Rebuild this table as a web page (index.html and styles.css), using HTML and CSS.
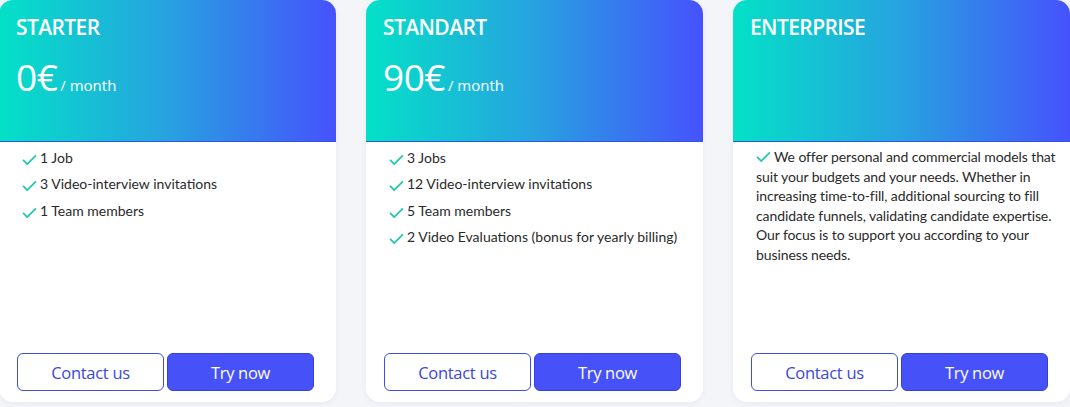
FILE: index.html
```html
<!DOCTYPE html>
<html>
<head>
<meta charset="utf-8">
<link rel="stylesheet" href="styles.css">
</head>
<body>
<div class="plans">
  <div class="card">
    <div class="head">
      <div class="title">STARTER</div>
      <div class="price"><span class="amount">0€</span><span class="per">/ month</span></div>
    </div>
    <ul class="features">
      <li><svg class="check" viewBox="0 0 16 12"><path d="M1 6.5 L5.5 11 L15 1.5"/></svg>1 Job</li>
      <li><svg class="check" viewBox="0 0 16 12"><path d="M1 6.5 L5.5 11 L15 1.5"/></svg>3 Video-interview invitations</li>
      <li><svg class="check" viewBox="0 0 16 12"><path d="M1 6.5 L5.5 11 L15 1.5"/></svg>1 Team members</li>
    </ul>
    <div class="actions">
      <button class="btn outline">Contact us</button>
      <button class="btn filled">Try now</button>
    </div>
  </div>
  <div class="card">
    <div class="head">
      <div class="title">STANDART</div>
      <div class="price"><span class="amount">90€</span><span class="per">/ month</span></div>
    </div>
    <ul class="features">
      <li><svg class="check" viewBox="0 0 16 12"><path d="M1 6.5 L5.5 11 L15 1.5"/></svg>3 Jobs</li>
      <li><svg class="check" viewBox="0 0 16 12"><path d="M1 6.5 L5.5 11 L15 1.5"/></svg>12 Video-interview invitations</li>
      <li><svg class="check" viewBox="0 0 16 12"><path d="M1 6.5 L5.5 11 L15 1.5"/></svg>5 Team members</li>
      <li><svg class="check" viewBox="0 0 16 12"><path d="M1 6.5 L5.5 11 L15 1.5"/></svg>2 Video Evaluations (bonus for yearly billing)</li>
    </ul>
    <div class="actions">
      <button class="btn outline">Contact us</button>
      <button class="btn filled">Try now</button>
    </div>
  </div>
  <div class="card">
    <div class="head">
      <div class="title">ENTERPRISE</div>
    </div>
    <p class="desc"><svg class="check" viewBox="0 0 16 12"><path d="M1 6.5 L5.5 11 L15 1.5"/></svg>We offer personal and commercial models that suit your budgets and your needs. Whether in increasing time-to-fill, additional sourcing to fill candidate funnels, validating candidate expertise. Our focus is to support you according to your business needs.</p>
    <div class="actions">
      <button class="btn outline">Contact us</button>
      <button class="btn filled">Try now</button>
    </div>
  </div>
</div>
</body>
</html>
```

FILE: styles.css
```css
* { box-sizing: border-box; }
html, body { margin: 0; padding: 0; }
body {
  background: #f3f5f9;
  width: 1070px;
  height: 407px;
  overflow: hidden;
  font-family: "Lato", "Noto Sans", sans-serif;
}
.plans {
  display: flex;
  gap: 30px;
  margin-left: -1px;
}
.card {
  width: 337px;
  height: 402px;
  flex: none;
  background: #fff;
  border-radius: 14px;
  box-shadow: 0 2px 6px rgba(40, 60, 120, 0.06);
  display: flex;
  flex-direction: column;
  overflow: hidden;
}
.head {
  height: 142px;
  flex: none;
  padding: 13px 17px 0;
  background: linear-gradient(90deg, #03e1c7 0%, #27a2e0 50%, #4652fd 100%);
  border-bottom: 1px solid #2d57d8;
  color: #fff;
}
.title {
  font-family: "Open Sans", sans-serif;
  font-weight: 600;
  font-size: 21px;
  letter-spacing: -0.6px;
  line-height: 28px;
}
.price {
  margin-top: 15px;
  display: flex;
  align-items: baseline;
}
.amount {
  font-family: "Open Sans", sans-serif;
  font-size: 37px;
  font-weight: 500;
  letter-spacing: -0.5px;
  line-height: 42px;
}
.per {
  font-family: "Open Sans", sans-serif;
  font-size: 15px;
  margin-left: 3px;
}
.features {
  list-style: none;
  margin: 0;
  padding: 3px 0 0 23px;
  flex: 1;
}
.features li {
  font-size: 14px;
  color: #2a2a2a;
  line-height: 26.3px;
  display: flex;
  align-items: center;
}
.check {
  width: 15px;
  height: 11px;
  margin-right: 3px;
  margin-top: 3px;
  fill: none;
  stroke: #1ec7ad;
  stroke-width: 1.9;
  flex: none;
}
.desc {
  margin: 0;
  padding: 5px 4px 0 23px;
  font-size: 14px;
  color: #2a2a2a;
  line-height: 19.5px;
  letter-spacing: -0.1px;
  flex: 1;
}
.desc .check {
  display: inline-block;
  vertical-align: baseline;
  margin: 0 3px 0 0;
}
.actions {
  display: flex;
  gap: 3px;
  padding: 0 0 11px 18px;
}
.btn {
  width: 147px;
  height: 38px;
  border-radius: 6px;
  font-family: "Open Sans", sans-serif;
  font-size: 16.5px;
  letter-spacing: -0.3px;
  cursor: pointer;
}
.outline {
  background: #fff;
  border: 1px solid #3f4ee0;
  color: #3a48d8;
}
.filled {
  background: #4651f7;
  border: 1px solid #3440d8;
  color: #fff;
}
```
